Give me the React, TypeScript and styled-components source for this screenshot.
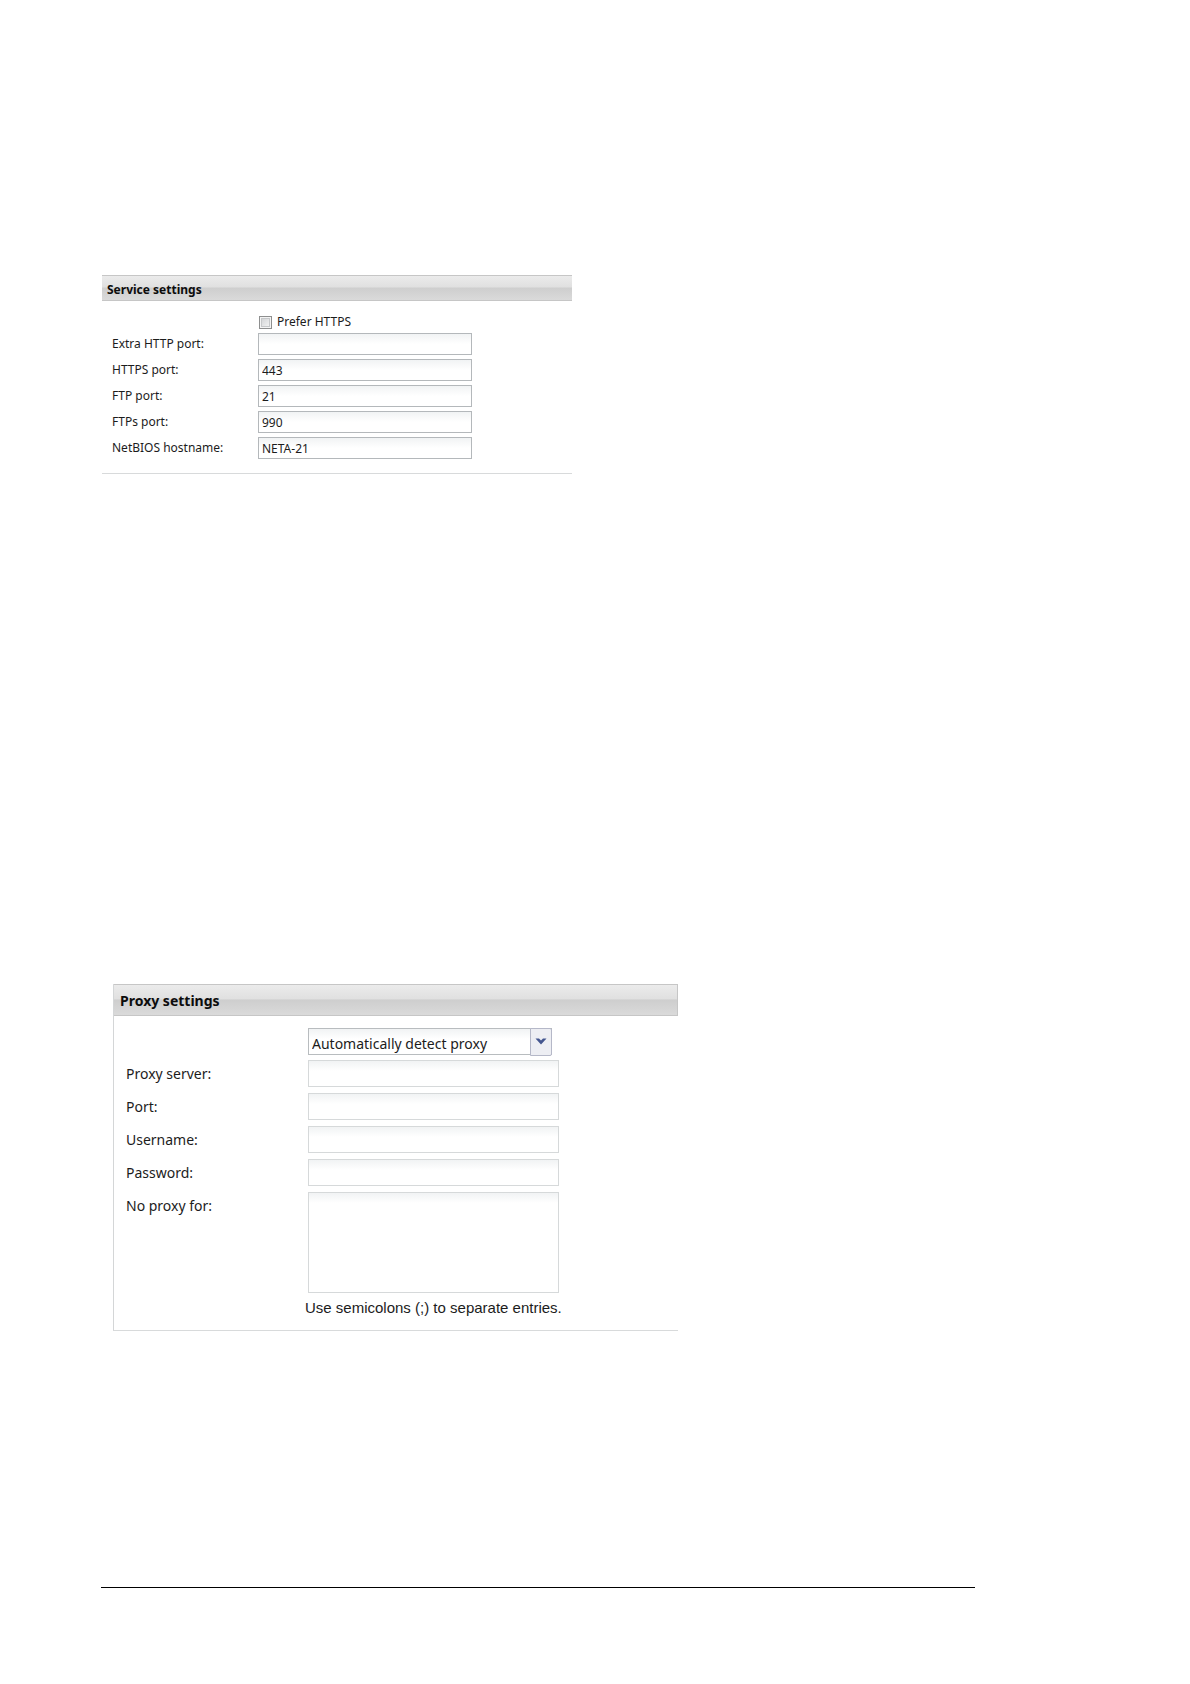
import React from "react";
import styled, { createGlobalStyle } from "styled-components";

const GlobalStyle = createGlobalStyle`
  *, *::before, *::after { box-sizing: border-box; }
  body {
    margin: 0;
    background: #fff;
    color: #1c1c1c;
    font-family: "Noto Sans", "DejaVu Sans", sans-serif;
  }
`;

const Page = styled.main`
  display: flex;
  flex-direction: column;
  width: 100%;
  max-width: 975px;
  padding: 275px 0 96px 101px;
`;

type Size = { $large?: boolean };

const Panel = styled.section<Size>`
  width: 100%;
  max-width: ${(p) => (p.$large ? "565px" : "470px")};
  margin: ${(p) => (p.$large ? "510px 0 0 12px" : "0 0 0 1px")};
  border-bottom: 1px solid #d8dadb;
  border-left: ${(p) => (p.$large ? "1px solid #d4d6d7" : "0")};
`;

const PanelTitle = styled.h2<Size>`
  display: flex;
  align-items: center;
  height: ${(p) => (p.$large ? "32px" : "26px")};
  margin: 0;
  padding: ${(p) => (p.$large ? "2px 6px 0" : "4px 5px 0")};
  border: 1px solid #c6c6c6;
  border-left-width: 0;
  border-right-width: ${(p) => (p.$large ? "1px" : "0")};
  background: linear-gradient(#ebebeb 0%, #e0e0e0 46%, #cecece 50%, #dadada 100%);
  color: #0c0c0c;
  font-size: ${(p) => (p.$large ? "14px" : "12px")};
  line-height: 20px;
  font-weight: 700;
`;

const Form = styled.form<Size>`
  display: flex;
  flex-direction: column;
  gap: ${(p) => (p.$large ? "6px" : "4px")};
  padding: ${(p) => (p.$large ? "12px 12px 13px" : "14px 10px 14px")};
  font-size: ${(p) => (p.$large ? "14px" : "12px")};
`;

const Row = styled.div<Size>`
  display: grid;
  grid-template-columns: ${(p) => (p.$large ? "182px 251px" : "146px 214px")};
  align-items: start;
`;

const Label = styled.label<Size>`
  line-height: ${(p) => (p.$large ? "27px" : "22px")};
`;

const Field = styled.input<Size>`
  width: 100%;
  height: ${(p) => (p.$large ? "27px" : "22px")};
  padding: 0 3px;
  border: 1px solid ${(p) => (p.$large ? "#d6d9da" : "#b4b8bb")};
  border-radius: 0;
  background: linear-gradient(#f1f3f4 0, #fff 10px);
  color: inherit;
  font: inherit;
`;

const Area = styled.textarea`
  display: block;
  width: 100%;
  height: 101px;
  padding: 3px;
  border: 1px solid #d6d9da;
  background: linear-gradient(#f1f3f4 0, #fff 10px);
  color: inherit;
  font: inherit;
  resize: none;
`;

const CheckLabel = styled.label`
  display: flex;
  grid-column: 2;
  align-items: center;
  gap: 5px;
  height: 14px;
  padding-left: 1px;
  line-height: 14px;
`;

const Check = styled.input`
  appearance: none;
  width: 13px;
  height: 13px;
  margin: 0;
  border: 1px solid #8e8f8f;
  background: linear-gradient(135deg, #cdcfd1, #f8f8f8);
  box-shadow: inset 0 0 0 1px #f4f4f4, inset 0 0 0 2px #c6c8ca;

  &:checked { background: #5a6fa8; }
`;

const SelectBox = styled.div`
  display: grid;
  grid-column: 2;
  grid-template-columns: 1fr 22px;
  align-items: start;
  width: 244px;
  height: 26px;
`;

const Select = styled.select`
  grid-area: 1 / 1 / 2 / 3;
  appearance: none;
  height: 27px;
  padding: 4px 24px 0 3px;
  border: 1px solid #b8bcbf;
  border-radius: 0;
  background: linear-gradient(#f1f3f4 0, #fff 10px);
  color: inherit;
  font: inherit;
`;

const Trigger = styled.span`
  display: flex;
  grid-area: 1 / 2 / 2 / 3;
  justify-content: center;
  height: 28px;
  padding-top: 9px;
  border: 1px solid #b5b8c8;
  border-radius: 0 2px 2px 0;
  background: #edeef3;
  pointer-events: none;
`;

const Hint = styled.p`
  grid-column: 2;
  margin: 0 0 0 -3px;
  font-family: "Liberation Sans", Arial, sans-serif;
  font-size: 15px;
  line-height: 18px;
  white-space: nowrap;
`;

const Rule = styled.hr`
  width: 100%;
  height: 1px;
  margin: 256px 0 0;
  border: 0;
  background: #000;
`;

const ports = [
  { id: "extra-http", label: "Extra HTTP port:", value: "" },
  { id: "https", label: "HTTPS port:", value: "443" },
  { id: "ftp", label: "FTP port:", value: "21" },
  { id: "ftps", label: "FTPs port:", value: "990" },
  { id: "netbios", label: "NetBIOS hostname:", value: "NETA-21" },
];

const proxyFields = [
  { id: "server", label: "Proxy server:", type: "text" },
  { id: "port", label: "Port:", type: "text" },
  { id: "username", label: "Username:", type: "text" },
  { id: "password", label: "Password:", type: "password" },
];

export default function App() {
  return (
    <>
      <GlobalStyle />
      <Page>
        <Panel>
          <PanelTitle>Service settings</PanelTitle>
          <Form>
            <Row>
              <CheckLabel>
                <Check type="checkbox" />
                Prefer HTTPS
              </CheckLabel>
            </Row>
            {ports.map((f) => (
              <Row key={f.id}>
                <Label htmlFor={f.id}>{f.label}</Label>
                <Field id={f.id} type="text" defaultValue={f.value} />
              </Row>
            ))}
          </Form>
        </Panel>

        <Panel $large>
          <PanelTitle $large>Proxy settings</PanelTitle>
          <Form $large>
            <Row $large>
              <SelectBox>
                <Select aria-label="Proxy mode" defaultValue="auto">
                  <option value="auto">Automatically detect proxy</option>
                </Select>
                <Trigger>
                  <svg width="12" height="8" viewBox="0 0 12 8" aria-hidden="true">
                    <path d="M0.5 0.5H4L6 2.5L8 0.5H11.5L6 6.5Z" fill="#44568f" />
                  </svg>
                </Trigger>
              </SelectBox>
            </Row>
            {proxyFields.map((f) => (
              <Row $large key={f.id}>
                <Label $large htmlFor={f.id}>{f.label}</Label>
                <Field $large id={f.id} type={f.type} />
              </Row>
            ))}
            <Row $large>
              <Label $large htmlFor="no-proxy">No proxy for:</Label>
              <Area id="no-proxy" aria-describedby="no-proxy-hint" />
            </Row>
            <Row $large>
              <Hint id="no-proxy-hint">Use semicolons (;) to separate entries.</Hint>
            </Row>
          </Form>
        </Panel>
        <Rule />
      </Page>
    </>
  );
}
